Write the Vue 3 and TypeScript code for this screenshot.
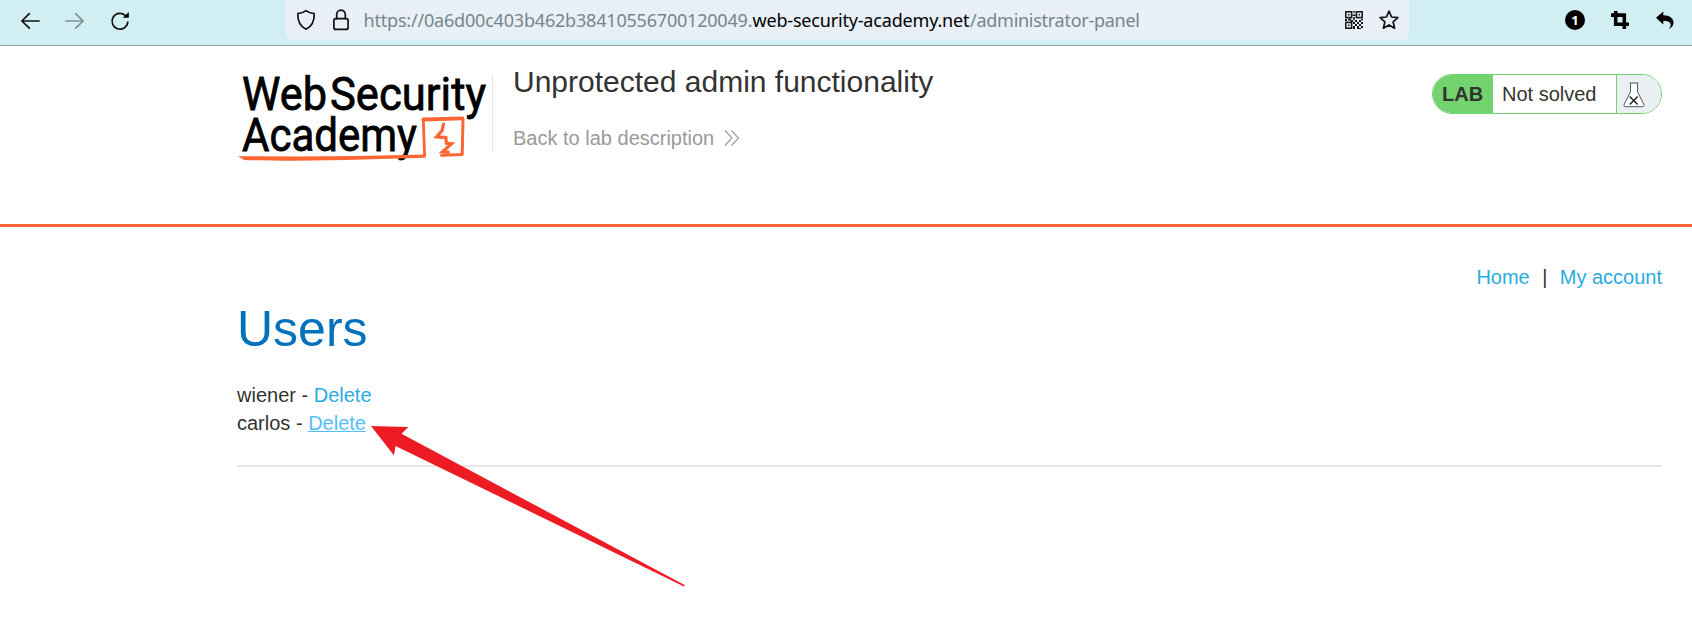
<script setup lang="ts">
interface User {
  name: string
  hovered: boolean
}

const users: User[] = [
  { name: 'wiener', hovered: false },
  { name: 'carlos', hovered: true },
]
</script>

<template>
  <div class="window">
    <div class="toolbar">
      <div class="nav-buttons">
        <svg width="18" height="18" viewBox="0 0 18 18" class="stroke"><path d="M18 9H.9M8.3 1.6.9 9l7.4 7.2" /></svg>
        <svg width="18" height="18" viewBox="0 0 18 18" class="stroke faded"><path d="M0 9h17.1M9.7 1.6 17.1 9l-7.4 7.2" /></svg>
        <svg width="18" height="20" viewBox="0 0 18 20" class="stroke">
          <path d="M16.8 11.2A7.9 7.9 0 1 1 14.2 4.3" />
          <path d="M17.8 1v5.800h-6z" fill="#000" stroke="none" />
        </svg>
      </div>
      <div class="address">
        <svg class="shield stroke" width="20" height="22" viewBox="0 0 20 22"><path d="M10 1.6C7.800 3.300 5 4.300 1.800 4.600 1.600 12 4 17.600 10 20.200 16 17.600 18.400 12 18.200 4.600 15 4.300 12.200 3.300 10 1.600z" /></svg>
        <svg class="lock stroke" width="18" height="22" viewBox="0 0 18 22"><rect x="1.900" y="9.600" width="14.200" height="10.800" rx="2" /><path d="M4.700 9.600V5.500a4.300 4.300 0 0 1 8.600 0v4.100" /></svg>
        <svg class="url" width="780" height="40">
          <text x="-0.500" y="26.500" textLength="389">https://0a6d00c403b462b38410556700120049.</text>
          <text x="388.500" y="26.500" textLength="217" class="host">web-security-academy.net</text>
          <text x="606" y="26.500" textLength="170">/administrator-panel</text>
        </svg>
        <svg class="qr" width="18" height="18" viewBox="0 0 18 18">
          <g fill="none" stroke="#1a1a1a" stroke-width="1.600">
            <rect x=".8" y=".8" width="5.800" height="5.800" /><rect x="11.400" y=".8" width="5.800" height="5.800" /><rect x=".8" y="11.400" width="5.800" height="5.800" />
          </g>
          <path fill="#1a1a1a" d="M3 3h1.500v1.500H3zM13.500 3H15v1.500h-1.500zM3 13.500h1.500V15H3zM8.200 0h1.600v1.800H8.200zM7.400 3.500h3.200v1.600H7.400zM8.200 6h1.600v3H8.200zM0 8h2v2H0zM3 7.500h3v2H3zM5.500 9h2.700v2H5.500zM8 11h2v2H8zM10 9h2v2h-2zM12 11h2v2h-2zM14 9h2v2h-2zM16 11h2v2h-2zM16 8h2v1.300h-2zM10 13h2v2h-2zM8 15h2v3H8zM12 15h2v3h-2zM14 13h2v2h-2zM16 15h2v2h-2zM14 17h2v1h-2z" />
        </svg>
        <svg class="star stroke" width="20" height="20" viewBox="0 0 20 20"><path d="M10 1.200 12.500 7l6.400.6-4.800 4.200 1.500 6.400L10 14.900l-5.600 3.300 1.500-6.400-4.800-4.200L7.500 7z" /></svg>
      </div>
      <div class="extensions">
        <span class="count">1</span>
        <svg width="18" height="18" viewBox="0 0 18 18" fill="none" stroke="#000" stroke-width="3.600"><path d="M4.700 0v13.300H18M0 4.100h13.300V18" /></svg>
        <svg width="18" height="18" viewBox="0 0 18 18"><path d="M0 6.800 7.300.5v3.700C14 4.300 17.600 7.400 17.500 11.800c-.1 3.200-2.200 5.300-4.900 6.100 1.800-1.700 2.600-3.500 1.800-5.300-.9-2-3.200-2.800-7.100-2.800v3.700z" /></svg>
      </div>
    </div>

    <header class="lab-header">
      <svg class="logo" width="254" height="100" viewBox="0 0 254 100">
        <g class="wordmark">
          <text x="4" y="45.500" textLength="85" lengthAdjust="spacingAndGlyphs">Web</text>
          <text x="92" y="45.500" textLength="156" lengthAdjust="spacingAndGlyphs">Security</text>
          <text x="4" y="86.500" textLength="175" lengthAdjust="spacingAndGlyphs">Academy</text>
        </g>
        <g fill="none" stroke="#ff6633" stroke-linecap="round" stroke-linejoin="round">
          <path d="M186.600 92 185.300 55.500" stroke-width="2.800" />
          <path d="M185.300 55.500 224.400 54.300" stroke-width="3.800" />
          <path d="M225 55 224.200 90.500 203.500 91.300" stroke-width="3" />
          <path d="m205.500 60-1.400 6.600-5.500 6.300 9.300.7.500 5.700 5.200.4-9.100 8.200 5.800.2" stroke-width="3.200" stroke-linejoin="miter" />
        </g>
        <path d="M0 92.300 60 92.400 120 92 187 90.500v3.300l-62 1.800c-40 1.300-86 1.500-119 .3z" fill="#ff6633" />
      </svg>
      <div class="title-block">
        <h2>Unprotected admin functionality</h2>
        <a class="back">Back to lab description
          <svg width="16" height="16" viewBox="0 0 16 16" fill="none" stroke="#999" stroke-width="1.100"><path d="m1 .5 7 7.500-7 7.500M7.500.5l7 7.500-7 7.500" /></svg>
        </a>
      </div>
      <div class="status">
        <span class="lab">LAB</span>
        <span class="state">Not solved</span>
        <span class="flask">
          <svg width="22" height="26" viewBox="0 0 22 26" fill="#fff" stroke="#555" stroke-width="1">
            <path d="M7.500 1.500v8.200L1.300 22.200c-.7 1.600-.3 2.500 1 2.500h17.400c1.300 0 1.700-.9 1-2.500L14.500 9.700V1.500M6.500 1h9" />
            <path d="m6.700 14.500 8 8M14.700 14.500l-8 8" stroke="#222" stroke-width="1.500" />
          </svg>
        </span>
      </div>
    </header>

    <main>
      <nav class="links"><a>Home</a><span>|</span><a>My account</a></nav>
      <h1>Users</h1>
      <div v-for="user in users" :key="user.name" class="user">
        <span>{{ user.name }} - </span><a :class="{ hovered: user.hovered }">Delete</a>
      </div>
      <hr>
    </main>

    <svg class="pointer" width="320" height="170" viewBox="0 0 320 170">
      <path d="M1 1 38.500 2 31.500 8.800 315 160.200 314 161.500 25.500 21 24 30.500z" fill="#ed1c24" />
    </svg>
  </div>
</template>

<style>
body {
  margin: 0;
  background: #fff;
}
</style>

<style scoped>
.window {
  position: relative;
  height: 636px;
  overflow: hidden;
  color: #333332;
  font: 20px/28px "Liberation Sans", Arial, sans-serif;
}
svg { display: block; flex: none; overflow: visible; }
.toolbar {
  display: flex;
  box-sizing: border-box;
  height: 46px;
  background: #d1eff2;
  border-bottom: 1px solid #91a7a9;
}
.stroke {
  fill: none;
  stroke: #111;
  stroke-width: 1.7;
  stroke-linecap: round;
  stroke-linejoin: round;
}
.faded { opacity: .42; }
.nav-buttons {
  display: flex;
  align-items: center;
  gap: 27px;
  box-sizing: border-box;
  width: 286px;
  height: 41px;
  padding-left: 21px;
}
.address {
  display: flex;
  align-items: center;
  width: 1123px;
  height: 40px;
  border-radius: 0 0 5px 5px;
  background: #e8eff6;
}
.shield { margin-left: 10px; }
.lock { margin-left: 16px; }
.url { margin-left: 14px; }
.url text { font: 18px "Noto Sans", sans-serif; fill: #75868a; }
.url .host { fill: #000; }
.qr { margin-left: 201px; }
.star { margin-left: 16px; }
.extensions {
  display: flex;
  align-items: center;
  gap: 27px;
  height: 40px;
  margin-left: 156px;
}
.extensions svg { margin-left: -1px; margin-right: 1px; }
.count {
  width: 20px;
  height: 20px;
  border-radius: 50%;
  background: #000;
  color: #fff;
  font: bold 13px/20px "Noto Sans", sans-serif;
  text-align: center;
}
.lab-header {
  display: flex;
  align-items: flex-start;
  box-sizing: border-box;
  height: 181px;
  padding: 18px 30px 0 238px;
  border-bottom: 3px solid #ff6633;
}
.wordmark text {
  font: 400 47px Roboto, sans-serif;
  fill: #000;
  stroke: #000;
  stroke-width: .8px;
}
.title-block {
  height: 78px;
  margin-top: 10px;
  padding-left: 20px;
  border-left: 1px solid #e6e6e6;
}
h2 {
  margin: -9px 0 0;
  font-size: 30px;
  font-weight: 400;
  line-height: 34px;
}
.back {
  display: flex;
  align-items: center;
  gap: 10px;
  margin-top: 25px;
}
.status {
  display: flex;
  box-sizing: border-box;
  width: 230px;
  height: 40px;
  margin: 10px 0 0 auto;
  overflow: hidden;
  border: 1px solid #72d36f;
  border-radius: 20px;
  line-height: 38px;
}
.lab {
  width: 60px;
  background: #72d36f;
  font-weight: 700;
  text-indent: 9px;
}
.state { width: 123px; text-indent: 9px; }
.flask {
  display: flex;
  flex: 1;
  align-items: center;
  padding-left: 6px;
  border-left: 1px solid #72d36f;
  background: #eaeff3;
}
.flask svg { margin-top: 2px; }
main { padding: 36px 30px 0 237px; }
.links {
  display: flex;
  justify-content: flex-end;
  gap: 12.4px;
}
a { color: #29abe2; }
a.back { color: #999; }
h1 {
  margin: 9px 0 23px;
  color: #0071bc;
  font-size: 50px;
  font-weight: 400;
  line-height: 58px;
}
.user { height: 28px; white-space: pre; }
a.hovered {
  color: #53bfff;
  text-decoration: underline;
  text-decoration-thickness: 1px;
}
hr {
  height: 2px;
  margin: 28px 0 0;
  border: 0;
  background: #e6e6e6;
}
.pointer {
  position: absolute;
  top: 425px;
  left: 370px;
}
</style>
